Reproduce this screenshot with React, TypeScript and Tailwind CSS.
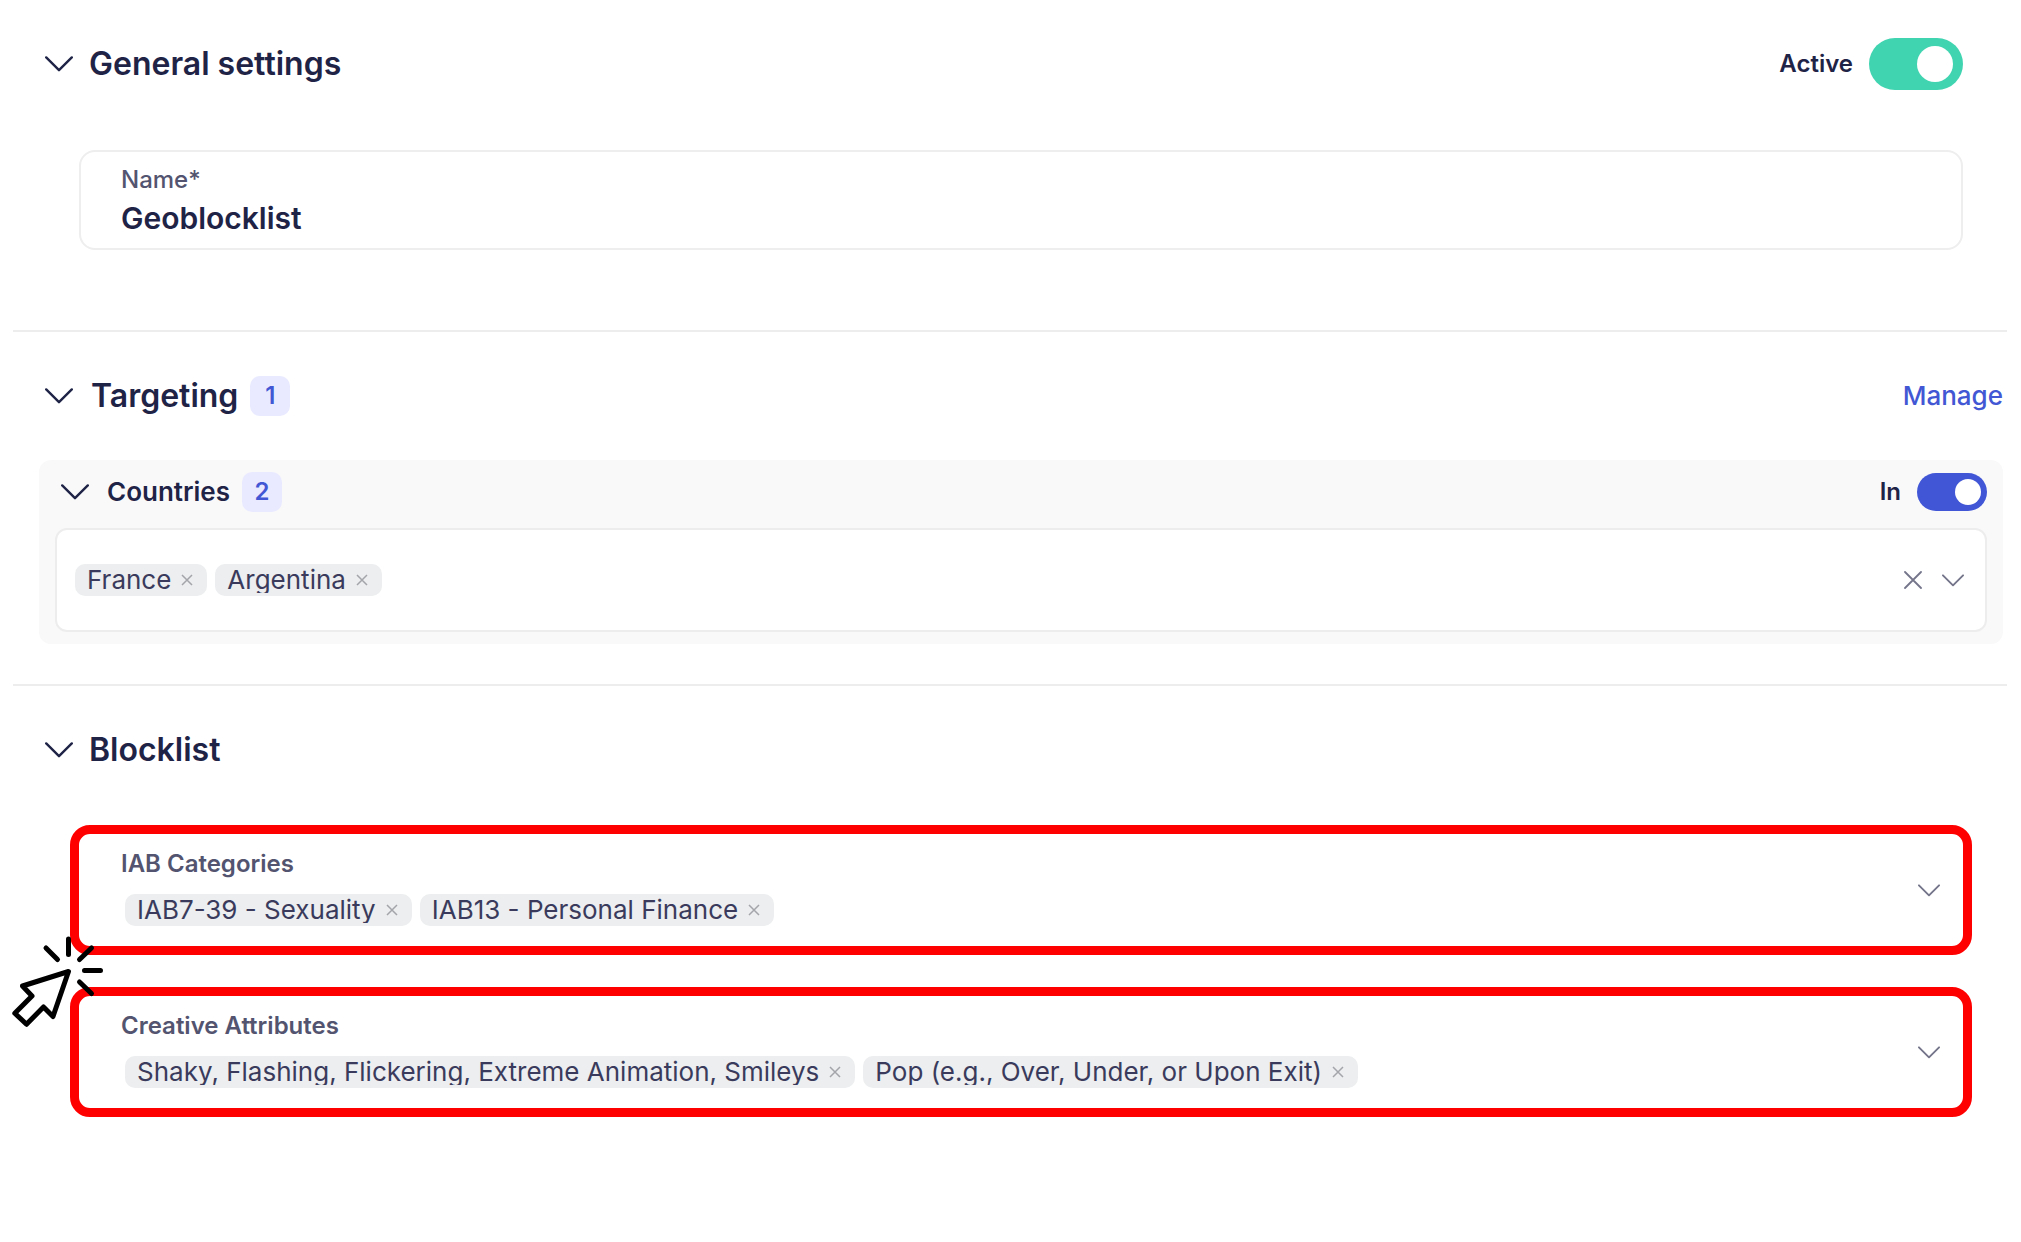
import { useState } from "react";

const Chevron = ({ className }: { className?: string }) => (
  <svg viewBox="0 0 28 16" fill="none" stroke="currentColor" strokeLinecap="round" className={className} aria-hidden="true">
    <path d="M1.2 1.4 L14 14.2 L26.8 1.4" strokeWidth="2.4" strokeLinejoin="round" />
  </svg>
);

const Badge = ({ count }: { count: number }) => (
  <span className="flex size-10 items-center justify-center rounded-[10px] bg-[#e9eaff] text-2xl font-semibold text-[#4257d4]">
    {count}
  </span>
);

interface SectionTitleProps {
  title: string;
  count?: number;
}

const SectionTitle = ({ title, count }: SectionTitleProps) => (
  <div className="flex items-center gap-3">
    <button type="button" aria-expanded="true" className={count === undefined ? "flex items-center gap-4" : "flex items-center gap-[18px]"}>
      <Chevron className="h-4 w-7" />
      <h2 className="text-[32px] leading-10 font-semibold">{title}</h2>
    </button>
    {count !== undefined && <Badge count={count} />}
  </div>
);

const Chip = ({ label, onRemove }: { label: string; onRemove: () => void }) => (
  <li className="flex h-8 items-start rounded-[10px] bg-[#eceeef] px-3 text-[26px] text-[#3a3b5c]">
    <span className="h-[29px] overflow-hidden pt-0.5 leading-7 whitespace-nowrap">{label}</span>
    <button type="button" aria-label={`Remove ${label}`} onClick={onRemove} className="flex h-8 w-6 items-center justify-center pl-2 text-[#a3a5aa]">
      <svg viewBox="0 0 12 12" fill="none" stroke="currentColor" strokeWidth="1.5" className="size-3 shrink-0">
        <path d="M1 1 L11 11 M11 1 L1 11" />
      </svg>
    </button>
  </li>
);

interface ChipListProps {
  items: string[];
  onChange: (items: string[]) => void;
}

const ChipList = ({ items, onChange }: ChipListProps) => (
  <ul className="flex flex-wrap gap-2">
    {items.map((item) => (
      <Chip key={item} label={item} onRemove={() => onChange(items.filter((i) => i !== item))} />
    ))}
  </ul>
);

const BlockField = ({ label, initial }: { label: string; initial: string[] }) => {
  const [items, setItems] = useState(initial);

  return (
    <div role="group" aria-label={label} className="flex items-center justify-between rounded-[20px] border-[9px] border-[#ff0000] bg-white pr-[23px] pl-[42px]">
      <div className="pt-4 pb-5">
        <h3 className="mb-4 text-2xl leading-7 font-semibold text-[#53546f]">{label}</h3>
        <div className="pl-1">
          <ChipList items={items} onChange={setItems} />
        </div>
      </div>
      <button type="button" aria-label={`Open ${label}`} className="text-[#74758a]">
        <Chevron className="h-[13px] w-[22px]" />
      </button>
    </div>
  );
};

/* Pointer with five click rays around its tip */
const ClickCursor = () => (
  <svg viewBox="0 0 92 92" fill="none" stroke="#000" strokeWidth="5" strokeLinecap="round" strokeLinejoin="round" className="pointer-events-none absolute top-[111px] left-[-1px] size-[92px]" aria-hidden="true">
    <path d="M56.5 35.5 L10.5 50 L20 60 L2.8 77.2 L14.5 88.3 L31.5 71 L41 80.5 Z" fill="#fff" />
    <path d="M56.5 3 V18.5 M34 12 L45.5 23.5 M79.5 12 L67.5 23.5 M72.5 34.5 H88.5 M67.5 46 L79.5 57.5" />
  </svg>
);

const App = () => {
  const [name, setName] = useState("Geoblocklist");
  const [active, setActive] = useState(true);
  const [include, setInclude] = useState(true);
  const [countries, setCountries] = useState(["France", "Argentina"]);

  return (
    <main className="min-h-screen bg-white pr-[14px] pl-[13px] font-[Inter,sans-serif] text-[#1f2447]">
      {/* General settings */}
      <section className="border-b-2 border-[#ededee] pt-[38px] pb-20">
        <div className="flex items-center justify-between pr-11 pl-8">
          <SectionTitle title="General settings" />
          <label className="flex cursor-pointer items-center gap-4 text-2xl font-semibold">
            Active
            <input type="checkbox" role="switch" checked={active} onChange={(e) => setActive(e.target.checked)} className="peer sr-only" />
            <span className="flex h-[52px] w-[94px] items-center rounded-full bg-gray-300 px-[10px] peer-checked:justify-end peer-checked:bg-[#40d4b0]">
              <span className="size-9 rounded-full bg-white" />
            </span>
          </label>
        </div>
        <div className="mt-[60px] mr-11 ml-[66px] flex flex-col rounded-2xl border-2 border-[#eeeeef] px-10 pt-3 pb-2">
          <label htmlFor="name" className="text-2xl leading-8 font-medium text-[#53546f]">Name*</label>
          <input id="name" value={name} onChange={(e) => setName(e.target.value)} className="h-11 w-full text-[30px] font-semibold outline-none" />
        </div>
      </section>

      {/* Targeting */}
      <section className="border-b-2 border-[#ededee] pt-11 pb-10">
        <div className="flex items-center justify-between pr-1 pl-8">
          <SectionTitle title="Targeting" count={1} />
          <a href="#manage" className="text-[26px] leading-8 font-medium text-[#4257d4]">Manage</a>
        </div>
        <div className="mt-11 mr-1 ml-[26px] rounded-xl bg-[#f9f9fa] px-4 py-3">
          <div className="flex items-center justify-between">
            <div className="flex items-center gap-3">
              <button type="button" aria-expanded="true" className="flex items-center gap-[18px] pl-[6px]">
                <Chevron className="h-4 w-7" />
                <h3 className="text-[26px] leading-8 font-semibold">Countries</h3>
              </button>
              <Badge count={2} />
            </div>
            <label className="flex cursor-pointer items-center gap-4 text-2xl font-semibold">
              In
              <input type="checkbox" role="switch" checked={include} onChange={(e) => setInclude(e.target.checked)} className="peer sr-only" />
              <span className="flex h-[38px] w-[70px] items-center rounded-full bg-gray-300 px-[6px] peer-checked:justify-end peer-checked:bg-[#4056d6]">
                <span className="size-[26px] rounded-full bg-white" />
              </span>
            </label>
          </div>
          <div className="mt-4 flex items-center justify-between rounded-xl border-2 border-[#ededee] bg-white py-[34px] pr-[21px] pl-[18px]">
            <ChipList items={countries} onChange={setCountries} />
            <div className="flex items-center gap-5 text-[#74758a]">
              <button type="button" aria-label="Clear countries" onClick={() => setCountries([])}>
                <svg viewBox="0 0 18 18" fill="none" stroke="currentColor" strokeWidth="1.8" strokeLinecap="round" className="size-[18px]">
                  <path d="M1 1 L17 17 M17 1 L1 17" />
                </svg>
              </button>
              <button type="button" aria-label="Open countries">
                <Chevron className="h-[13px] w-[22px]" />
              </button>
            </div>
          </div>
        </div>
      </section>

      {/* Blocklist */}
      <section className="pt-11 pb-20">
        <div className="pl-8">
          <SectionTitle title="Blocklist" />
        </div>
        <div className="relative mt-[55px]">
          <div className="mr-[35px] ml-[57px] flex flex-col gap-8">
            <BlockField label="IAB Categories" initial={["IAB7-39 - Sexuality", "IAB13 - Personal Finance"]} />
            <BlockField label="Creative Attributes" initial={["Shaky, Flashing, Flickering, Extreme Animation, Smileys", "Pop (e.g., Over, Under, or Upon Exit)"]} />
          </div>
          <ClickCursor />
        </div>
      </section>
    </main>
  );
};

export default App;
